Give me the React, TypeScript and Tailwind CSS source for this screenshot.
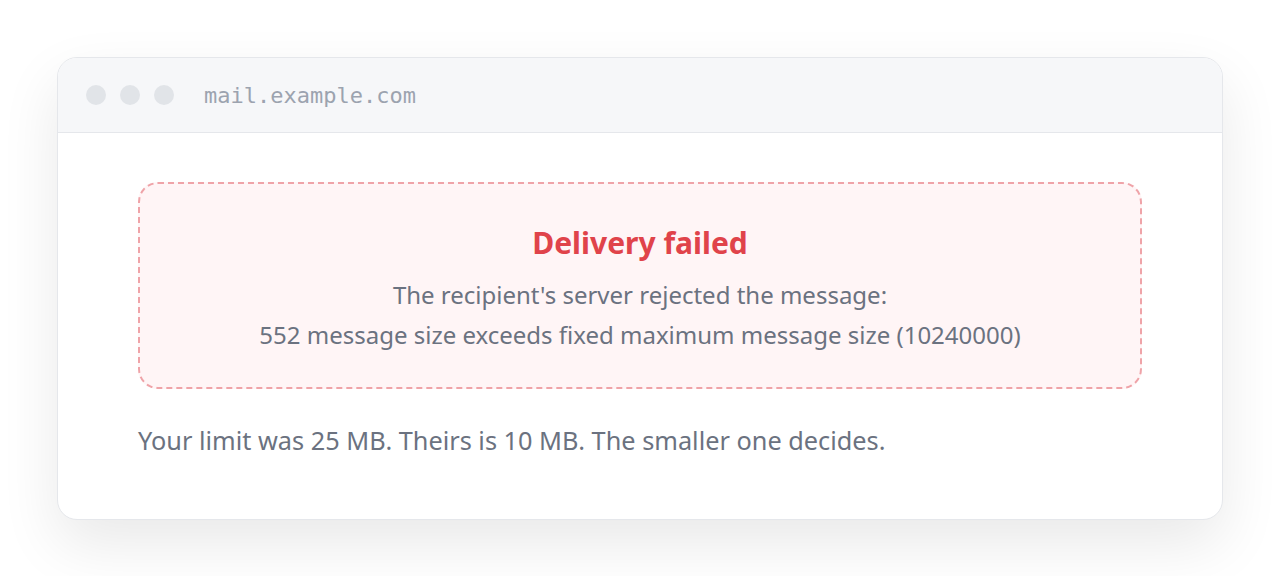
export default function App() {
  return (
    <div className="min-h-[576px] w-full bg-white px-[57px] pt-[57px] pb-[57px]" style={{ fontFamily: '"Noto Sans", "Open Sans", sans-serif' }}>
      <div className="w-full overflow-hidden rounded-[20px] border border-[#e5e7eb] bg-white shadow-[0_24px_60px_rgba(0,0,0,0.09)]">
        {/* barra do navegador */}
        <div className="flex h-[75px] items-center border-b border-[#e5e7eb] bg-[#f6f7f9] px-[28px]">
          <div className="flex gap-[14px]">
            <span className="h-[20px] w-[20px] rounded-full bg-[#e1e4e8]" />
            <span className="h-[20px] w-[20px] rounded-full bg-[#e1e4e8]" />
            <span className="h-[20px] w-[20px] rounded-full bg-[#e1e4e8]" />
          </div>
          <span className="ml-[30px] text-[22px] text-[#9ca3af]" style={{ fontFamily: '"DejaVu Sans Mono", "Liberation Mono", monospace' }}>
            mail.example.com
          </span>
        </div>

        {/* conteúdo */}
        <div className="px-[80px] pt-[49px] pb-[61px]">
          <div className="rounded-[20px] border-2 border-dashed border-[#efa3a8] bg-[#fff5f6] px-8 pt-[41px] pb-[32px] text-center">
            <h1 className="text-[30px] font-bold leading-[36px] text-[#e0434a]">Delivery failed</h1>
            <p className="mt-[14px] text-[24px] leading-[40px] text-[#6b7280]">
              The recipient's server rejected the message:
              <br />
              552 message size exceeds fixed maximum message size (10240000)
            </p>
          </div>
          <p className="mt-[33px] text-[25.3px] leading-[36px] text-[#6b7280]">
            Your limit was 25 MB. Theirs is 10 MB. The smaller one decides.
          </p>
        </div>
      </div>
    </div>
  );
}
